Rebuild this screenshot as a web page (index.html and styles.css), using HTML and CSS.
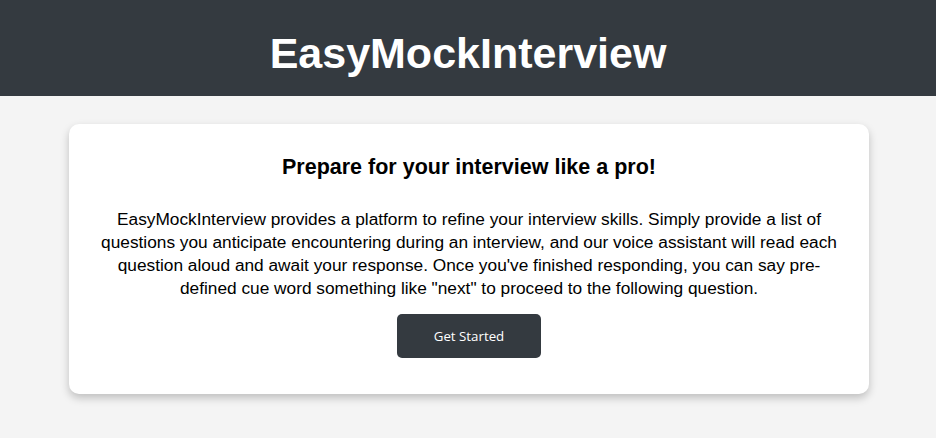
FILE: index.html
```html
<!DOCTYPE html>
<html>
<head>
    <title>EasyMockInterview</title>
    <link rel="stylesheet" href="styles.css">
</head>
<body>
    <header class="site-header">
        <h1 class="site-header__title">EasyMockInterview</h1>
    </header>
    <main class="intro">
        <div class="intro-card">
            <h2 class="intro-card__title">Prepare for your interview like a pro!</h2>
            <p class="intro-card__text">EasyMockInterview provides a platform to refine your interview skills. Simply provide a list of questions you anticipate encountering during an interview, and our voice assistant will read each question aloud and await your response. Once you've finished responding, you can say pre-defined cue word something like "next" to proceed to the following question.</p>
            <button class="intro-card__button">Get Started</button>
        </div>
    </main>
</body>
</html>
```

FILE: styles.css
```css
* {
    margin: 0;
    padding: 0;
    box-sizing: border-box;
}

body {
    font-family: "Liberation Sans", Arial, sans-serif;
    background: #f4f4f4;
    color: #000;
    height: 100vh;
    overflow: hidden;
}

.site-header {
    background: #343a40;
    height: 96px;
    padding-top: 10px;
    display: flex;
    align-items: center;
    justify-content: center;
}

.site-header__title {
    color: #fff;
    font-size: 43px;
    font-weight: 700;
}

.intro {
    display: flex;
    justify-content: center;
    padding: 28px 0 0 2px;
}

.intro-card {
    width: 800px;
    background: #fff;
    border-radius: 10px;
    box-shadow: 0 4px 8px rgba(0, 0, 0, 0.22);
    padding: 31px 26px 36px;
    display: flex;
    flex-direction: column;
    align-items: center;
    text-align: center;
}

.intro-card__title {
    font-size: 21.5px;
    font-weight: 700;
    margin-bottom: 28px;
}

.intro-card__text {
    font-size: 17.3px;
    line-height: 23px;
    margin-bottom: 14px;
}

.intro-card__button {
    width: 144px;
    height: 44px;
    background: #343a40;
    color: #fff;
    border: none;
    border-radius: 5px;
    font-family: "Open Sans", "Noto Sans", sans-serif;
    font-size: 13.3px;
    cursor: pointer;
}
```
